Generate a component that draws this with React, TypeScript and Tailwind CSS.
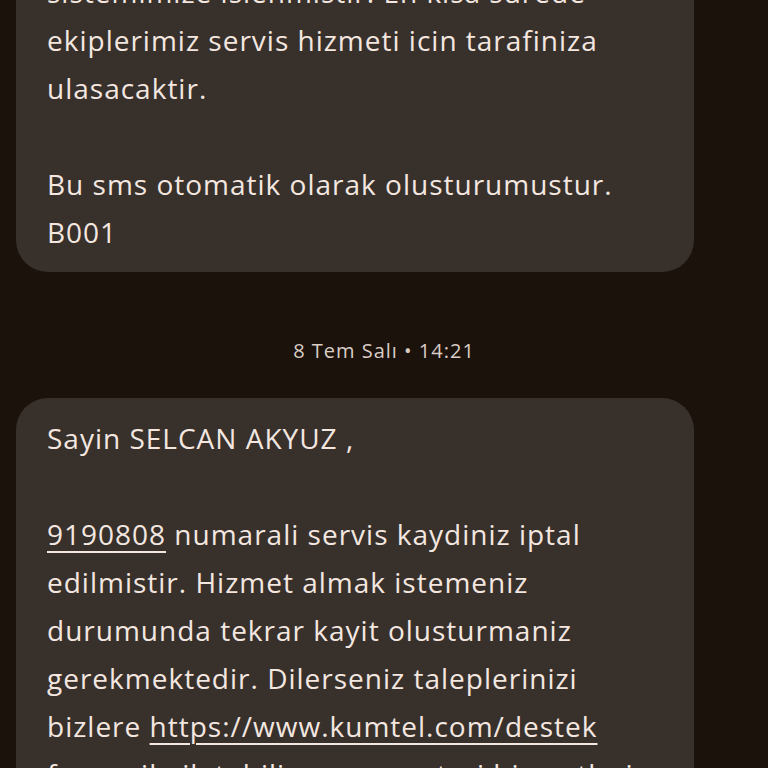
import React from "react";

const Line = ({ children }: { children?: React.ReactNode }) => (
  <div className="whitespace-nowrap h-[48px] leading-[46px]">{children ?? "\u00a0"}</div>
);

const U = ({ children }: { children: React.ReactNode }) => (
  <span className="underline decoration-[2px] underline-offset-[6px]">{children}</span>
);

export default function App() {
  return (
    <div
      className="w-[768px] h-[768px] overflow-hidden bg-[#1c120c] text-[#f3e7e0] tracking-[1px]"
      style={{ fontFamily: "'Open Sans', 'Noto Sans', sans-serif" }}
    >
      <div className="ml-4 w-[678px] mt-[-47px] rounded-[32px] bg-[#38302b] pl-[31px] pr-6 pt-4 pb-[15px] text-[28px]">
        <Line>sistemimize islenmistir. En kisa surede</Line>
        <Line>ekiplerimiz servis hizmeti icin tarafiniza</Line>
        <Line>ulasacaktir.</Line>
        <Line />
        <Line>Bu sms otomatik olarak olusturumustur.</Line>
        <Line>B001</Line>
      </div>
      <div className="mt-[65px] h-[28px] leading-[28px] text-center text-[20px] text-[#d9cdc6]">
        8 Tem Salı • 14:21
      </div>
      <div className="ml-4 mt-[33px] w-[678px] rounded-[32px] bg-[#38302b] pl-[31px] pr-6 pt-[17px] pb-4 text-[28px]">
        <Line>Sayin SELCAN AKYUZ ,</Line>
        <Line />
        <Line>
          <U>9190808</U> numarali servis kaydiniz iptal
        </Line>
        <Line>edilmistir. Hizmet almak istemeniz</Line>
        <Line>durumunda tekrar kayit olusturmaniz</Line>
        <Line>gerekmektedir. Dilerseniz taleplerinizi</Line>
        <Line>
          bizlere <U>https://www.kumtel.com/destek</U>
        </Line>
        <Line>formu ile iletebilir veya musteri hizmetleri</Line>
        <Line>arayabilirsiniz.</Line>
      </div>
    </div>
  );
}
